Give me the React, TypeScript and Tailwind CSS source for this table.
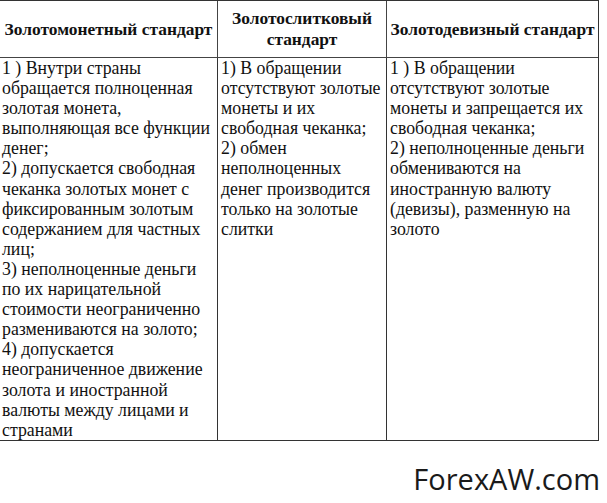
const COLS = [
  {
    head: "Золотомонетный стандарт",
    lines: [
      "1 ) Внутри страны",
      "обращается полноценная",
      "золотая монета,",
      "выполняющая все функции",
      "денег;",
      "2) допускается свободная",
      "чеканка золотых монет с",
      "фиксированным золотым",
      "содержанием для частных",
      "лиц;",
      "3) неполноценные деньги",
      "по их нарицательной",
      "стоимости неограниченно",
      "размениваются на золото;",
      "4) допускается",
      "неограниченное движение",
      "золота и иностранной",
      "валюты между лицами и",
      "странами",
    ],
  },
  {
    head: "Золотослитковый стандарт",
    lines: [
      "1) В обращении",
      "отсутствуют золотые",
      "монеты и их",
      "свободная чеканка;",
      "2) обмен",
      "неполноценных",
      "денег производится",
      "только на золотые",
      "слитки",
    ],
  },
  {
    head: "Золотодевизный стандарт",
    lines: [
      "1 ) В обращении",
      "отсутствуют золотые",
      "монеты и запрещается их",
      "свободная чеканка;",
      "2) неполноценные деньги",
      "обмениваются на",
      "иностранную валюту",
      "(девизы), разменную на",
      "золото",
    ],
  },
];

export default function App() {
  return (
    <div className="w-[607px] h-[503px] bg-white text-[#111] font-[family-name:Liberation_Serif,Times_New_Roman,serif] overflow-hidden">
      <div className="w-[599px] grid grid-cols-[217px_169px_212px] border-t border-r border-[#333]">
        {COLS.map((c, i) => (
          <div
            key={"h" + i}
            className={`h-[57px] flex items-center justify-center text-center font-bold text-[17.4px] leading-[21px] border-b border-[#444] ${i > 0 ? "border-l border-[#333]" : ""} ${i === 1 ? "px-[10px]" : "px-0"}`}
          >
            {c.head}
          </div>
        ))}
        {COLS.map((c, i) => (
          <div
            key={"b" + i}
            className={`h-[383px] text-[17.8px] leading-[20.1px] border-b border-[#333] ${i > 0 ? "border-l border-[#333] pl-[3px]" : "pl-[2px]"}`}
          >
            {c.lines.map((l, j) => (
              <div key={j} className="whitespace-nowrap">{l}</div>
            ))}
          </div>
        ))}
      </div>
      <div className="w-[600px] flex justify-end pt-[19px]">
        <span className="font-[family-name:Open_Sans,sans-serif] text-[29px] leading-[38px] text-[#1a1a1a]">ForexAW.com</span>
      </div>
    </div>
  );
}
